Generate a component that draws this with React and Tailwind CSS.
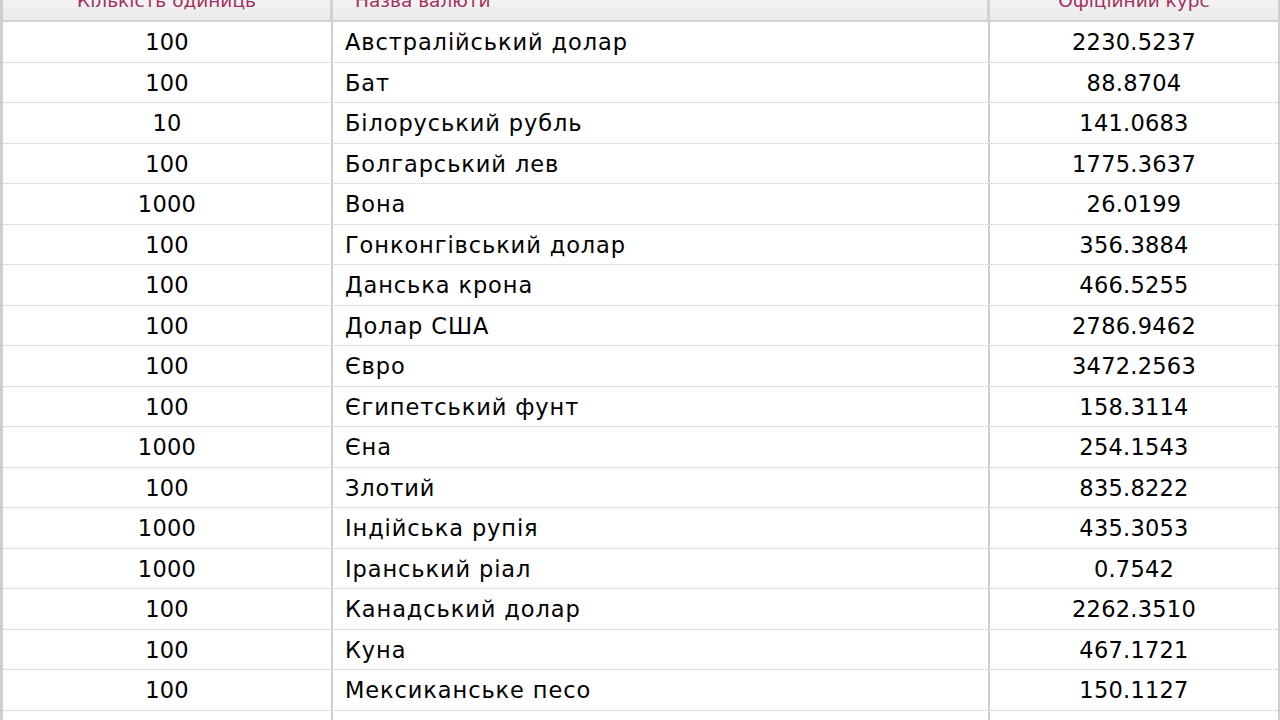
import React from 'react';

const rates = [
  ['100', 'Австралійський долар', '2230.5237'],
  ['100', 'Бат', '88.8704'],
  ['10', 'Білоруський рубль', '141.0683'],
  ['100', 'Болгарський лев', '1775.3637'],
  ['1000', 'Вона', '26.0199'],
  ['100', 'Гонконгівський долар', '356.3884'],
  ['100', 'Данська крона', '466.5255'],
  ['100', 'Долар США', '2786.9462'],
  ['100', 'Євро', '3472.2563'],
  ['100', 'Єгипетський фунт', '158.3114'],
  ['1000', 'Єна', '254.1543'],
  ['100', 'Злотий', '835.8222'],
  ['1000', 'Індійська рупія', '435.3053'],
  ['1000', 'Іранський ріал', '0.7542'],
  ['100', 'Канадський долар', '2262.3510'],
  ['100', 'Куна', '467.1721'],
  ['100', 'Мексиканське песо', '150.1127'],
  ['100', 'Молдовський лей', '155.4210'],
];

export default function App() {
  return (
    <div
      className="w-[1280px] h-[720px] overflow-hidden bg-white text-black"
      style={{ fontFamily: '"DejaVu Sans", Verdana, sans-serif' }}
    >
      {/* page is scrolled a little, header partly above the fold */}
      <div className="-mt-[18px] border-l-[3px] border-r-2 border-[#cfcfcf]">
        <div className="flex h-[40px] border-b-2 border-[#d2d2d2] bg-gradient-to-b from-[#fafafa] to-[#ebebeb] text-[18.5px] text-[#a2305c]">
          <div className="w-[330px] border-r-[3px] border-[#d2d2d2] flex items-center justify-center">
            Кількість одиниць
          </div>
          <div className="w-[657px] border-r-[3px] border-[#d2d2d2] flex items-center pl-[22px]">
            Назва валюти
          </div>
          <div className="flex-1 flex items-center justify-center">Офіційний курс</div>
        </div>

        {rates.map(([units, name, rate]) => (
          <div key={name} className="flex h-[40.5px] border-b border-dotted border-[#c4c4c4] text-[22.5px]">
            <div className="w-[330px] pt-[3px] border-r-2 border-solid border-[#cfcfcf] flex items-center justify-center tracking-[0.25px]">
              {units}
            </div>
            <div className="w-[657px] pt-[3px] border-r-2 border-solid border-[#cfcfcf] flex items-center pl-[12px] tracking-[0.9px]">
              {name}
            </div>
            <div className="flex-1 pt-[3px] flex items-center justify-center tracking-[0.25px]">{rate}</div>
          </div>
        ))}
      </div>
    </div>
  );
}
